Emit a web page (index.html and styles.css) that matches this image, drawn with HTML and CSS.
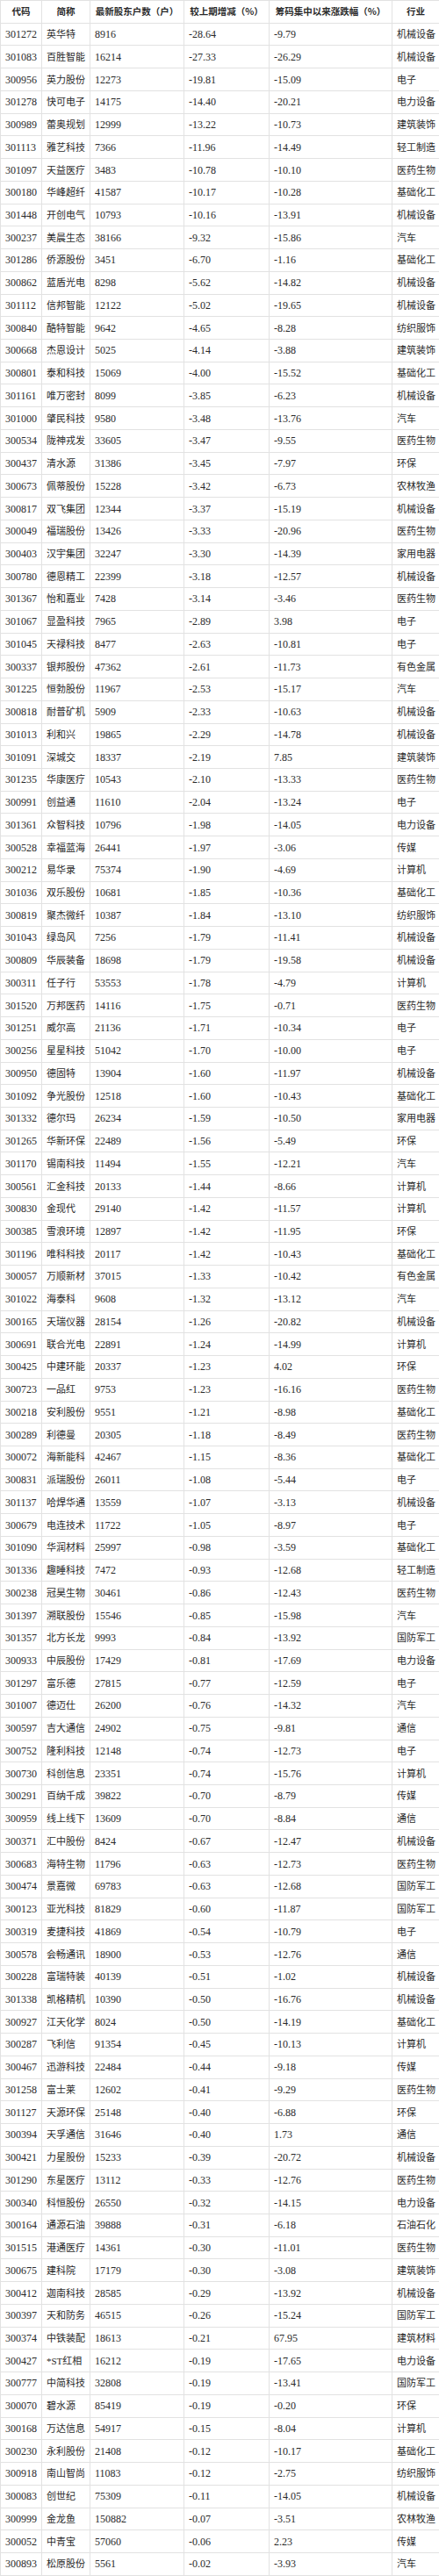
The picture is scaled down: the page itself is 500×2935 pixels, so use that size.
FILE: index.html
```html
<!DOCTYPE html>
<html lang="zh-CN">
<head>
<meta charset="utf-8">
<title>股东户数</title>
<link rel="stylesheet" href="styles.css">
</head>
<body>
<table class="grid">
<colgroup>
<col class="w-code"><col class="w-name"><col class="w-hold"><col class="w-chg"><col class="w-rate"><col class="w-ind">
</colgroup>
<thead>
<tr><th>代码</th><th>简称</th><th>最新股东户数（户）</th><th>较上期增减（%）</th><th>筹码集中以来涨跌幅（%）</th><th>行业</th></tr>
</thead>
<tbody>
<tr><td class="n">301272</td><td class="c">英华特</td><td class="n">8916</td><td class="n">-28.64</td><td class="n">-9.79</td><td class="c">机械设备</td></tr>
<tr><td class="n">301083</td><td class="c">百胜智能</td><td class="n">16214</td><td class="n">-27.33</td><td class="n">-26.29</td><td class="c">机械设备</td></tr>
<tr><td class="n">300956</td><td class="c">英力股份</td><td class="n">12273</td><td class="n">-19.81</td><td class="n">-15.09</td><td class="c">电子</td></tr>
<tr><td class="n">301278</td><td class="c">快可电子</td><td class="n">14175</td><td class="n">-14.40</td><td class="n">-20.21</td><td class="c">电力设备</td></tr>
<tr><td class="n">300989</td><td class="c">蕾奥规划</td><td class="n">12999</td><td class="n">-13.22</td><td class="n">-10.73</td><td class="c">建筑装饰</td></tr>
<tr><td class="n">301113</td><td class="c">雅艺科技</td><td class="n">7366</td><td class="n">-11.96</td><td class="n">-14.49</td><td class="c">轻工制造</td></tr>
<tr><td class="n">301097</td><td class="c">天益医疗</td><td class="n">3483</td><td class="n">-10.78</td><td class="n">-10.10</td><td class="c">医药生物</td></tr>
<tr><td class="n">300180</td><td class="c">华峰超纤</td><td class="n">41587</td><td class="n">-10.17</td><td class="n">-10.28</td><td class="c">基础化工</td></tr>
<tr><td class="n">301448</td><td class="c">开创电气</td><td class="n">10793</td><td class="n">-10.16</td><td class="n">-13.91</td><td class="c">机械设备</td></tr>
<tr><td class="n">300237</td><td class="c">美晨生态</td><td class="n">38166</td><td class="n">-9.32</td><td class="n">-15.86</td><td class="c">汽车</td></tr>
<tr><td class="n">301286</td><td class="c">侨源股份</td><td class="n">3451</td><td class="n">-6.70</td><td class="n">-1.16</td><td class="c">基础化工</td></tr>
<tr><td class="n">300862</td><td class="c">蓝盾光电</td><td class="n">8298</td><td class="n">-5.62</td><td class="n">-14.82</td><td class="c">机械设备</td></tr>
<tr><td class="n">301112</td><td class="c">信邦智能</td><td class="n">12122</td><td class="n">-5.02</td><td class="n">-19.65</td><td class="c">机械设备</td></tr>
<tr><td class="n">300840</td><td class="c">酷特智能</td><td class="n">9642</td><td class="n">-4.65</td><td class="n">-8.28</td><td class="c">纺织服饰</td></tr>
<tr><td class="n">300668</td><td class="c">杰恩设计</td><td class="n">5025</td><td class="n">-4.14</td><td class="n">-3.88</td><td class="c">建筑装饰</td></tr>
<tr><td class="n">300801</td><td class="c">泰和科技</td><td class="n">15069</td><td class="n">-4.00</td><td class="n">-15.52</td><td class="c">基础化工</td></tr>
<tr><td class="n">301161</td><td class="c">唯万密封</td><td class="n">8099</td><td class="n">-3.85</td><td class="n">-6.23</td><td class="c">机械设备</td></tr>
<tr><td class="n">301000</td><td class="c">肇民科技</td><td class="n">9580</td><td class="n">-3.48</td><td class="n">-13.76</td><td class="c">汽车</td></tr>
<tr><td class="n">300534</td><td class="c">陇神戎发</td><td class="n">33605</td><td class="n">-3.47</td><td class="n">-9.55</td><td class="c">医药生物</td></tr>
<tr><td class="n">300437</td><td class="c">清水源</td><td class="n">31386</td><td class="n">-3.45</td><td class="n">-7.97</td><td class="c">环保</td></tr>
<tr><td class="n">300673</td><td class="c">佩蒂股份</td><td class="n">15228</td><td class="n">-3.42</td><td class="n">-6.73</td><td class="c">农林牧渔</td></tr>
<tr><td class="n">300817</td><td class="c">双飞集团</td><td class="n">12344</td><td class="n">-3.37</td><td class="n">-15.19</td><td class="c">机械设备</td></tr>
<tr><td class="n">300049</td><td class="c">福瑞股份</td><td class="n">13426</td><td class="n">-3.33</td><td class="n">-20.96</td><td class="c">医药生物</td></tr>
<tr><td class="n">300403</td><td class="c">汉宇集团</td><td class="n">32247</td><td class="n">-3.30</td><td class="n">-14.39</td><td class="c">家用电器</td></tr>
<tr><td class="n">300780</td><td class="c">德恩精工</td><td class="n">22399</td><td class="n">-3.18</td><td class="n">-12.57</td><td class="c">机械设备</td></tr>
<tr><td class="n">301367</td><td class="c">怡和嘉业</td><td class="n">7428</td><td class="n">-3.14</td><td class="n">-3.46</td><td class="c">医药生物</td></tr>
<tr><td class="n">301067</td><td class="c">显盈科技</td><td class="n">7965</td><td class="n">-2.89</td><td class="n">3.98</td><td class="c">电子</td></tr>
<tr><td class="n">301045</td><td class="c">天禄科技</td><td class="n">8477</td><td class="n">-2.63</td><td class="n">-10.81</td><td class="c">电子</td></tr>
<tr><td class="n">300337</td><td class="c">银邦股份</td><td class="n">47362</td><td class="n">-2.61</td><td class="n">-11.73</td><td class="c">有色金属</td></tr>
<tr><td class="n">301225</td><td class="c">恒勃股份</td><td class="n">11967</td><td class="n">-2.53</td><td class="n">-15.17</td><td class="c">汽车</td></tr>
<tr><td class="n">300818</td><td class="c">耐普矿机</td><td class="n">5909</td><td class="n">-2.33</td><td class="n">-10.63</td><td class="c">机械设备</td></tr>
<tr><td class="n">301013</td><td class="c">利和兴</td><td class="n">19865</td><td class="n">-2.29</td><td class="n">-14.78</td><td class="c">机械设备</td></tr>
<tr><td class="n">301091</td><td class="c">深城交</td><td class="n">18337</td><td class="n">-2.19</td><td class="n">7.85</td><td class="c">建筑装饰</td></tr>
<tr><td class="n">301235</td><td class="c">华康医疗</td><td class="n">10543</td><td class="n">-2.10</td><td class="n">-13.33</td><td class="c">医药生物</td></tr>
<tr><td class="n">300991</td><td class="c">创益通</td><td class="n">11610</td><td class="n">-2.04</td><td class="n">-13.24</td><td class="c">电子</td></tr>
<tr><td class="n">301361</td><td class="c">众智科技</td><td class="n">10796</td><td class="n">-1.98</td><td class="n">-14.05</td><td class="c">电力设备</td></tr>
<tr><td class="n">300528</td><td class="c">幸福蓝海</td><td class="n">26441</td><td class="n">-1.97</td><td class="n">-3.06</td><td class="c">传媒</td></tr>
<tr><td class="n">300212</td><td class="c">易华录</td><td class="n">75374</td><td class="n">-1.90</td><td class="n">-4.69</td><td class="c">计算机</td></tr>
<tr><td class="n">301036</td><td class="c">双乐股份</td><td class="n">10681</td><td class="n">-1.85</td><td class="n">-10.36</td><td class="c">基础化工</td></tr>
<tr><td class="n">300819</td><td class="c">聚杰微纤</td><td class="n">10387</td><td class="n">-1.84</td><td class="n">-13.10</td><td class="c">纺织服饰</td></tr>
<tr><td class="n">301043</td><td class="c">绿岛风</td><td class="n">7256</td><td class="n">-1.79</td><td class="n">-11.41</td><td class="c">机械设备</td></tr>
<tr><td class="n">300809</td><td class="c">华辰装备</td><td class="n">18698</td><td class="n">-1.79</td><td class="n">-19.58</td><td class="c">机械设备</td></tr>
<tr><td class="n">300311</td><td class="c">任子行</td><td class="n">53553</td><td class="n">-1.78</td><td class="n">-4.79</td><td class="c">计算机</td></tr>
<tr><td class="n">301520</td><td class="c">万邦医药</td><td class="n">14116</td><td class="n">-1.75</td><td class="n">-0.71</td><td class="c">医药生物</td></tr>
<tr><td class="n">301251</td><td class="c">威尔高</td><td class="n">21136</td><td class="n">-1.71</td><td class="n">-10.34</td><td class="c">电子</td></tr>
<tr><td class="n">300256</td><td class="c">星星科技</td><td class="n">51042</td><td class="n">-1.70</td><td class="n">-10.00</td><td class="c">电子</td></tr>
<tr><td class="n">300950</td><td class="c">德固特</td><td class="n">13904</td><td class="n">-1.60</td><td class="n">-11.97</td><td class="c">机械设备</td></tr>
<tr><td class="n">301092</td><td class="c">争光股份</td><td class="n">12518</td><td class="n">-1.60</td><td class="n">-10.43</td><td class="c">基础化工</td></tr>
<tr><td class="n">301332</td><td class="c">德尔玛</td><td class="n">26234</td><td class="n">-1.59</td><td class="n">-10.50</td><td class="c">家用电器</td></tr>
<tr><td class="n">301265</td><td class="c">华新环保</td><td class="n">22489</td><td class="n">-1.56</td><td class="n">-5.49</td><td class="c">环保</td></tr>
<tr><td class="n">301170</td><td class="c">锡南科技</td><td class="n">11494</td><td class="n">-1.55</td><td class="n">-12.21</td><td class="c">汽车</td></tr>
<tr><td class="n">300561</td><td class="c">汇金科技</td><td class="n">20133</td><td class="n">-1.44</td><td class="n">-8.66</td><td class="c">计算机</td></tr>
<tr><td class="n">300830</td><td class="c">金现代</td><td class="n">29140</td><td class="n">-1.42</td><td class="n">-11.57</td><td class="c">计算机</td></tr>
<tr><td class="n">300385</td><td class="c">雪浪环境</td><td class="n">12897</td><td class="n">-1.42</td><td class="n">-11.95</td><td class="c">环保</td></tr>
<tr><td class="n">301196</td><td class="c">唯科科技</td><td class="n">20117</td><td class="n">-1.42</td><td class="n">-10.43</td><td class="c">基础化工</td></tr>
<tr><td class="n">300057</td><td class="c">万顺新材</td><td class="n">37015</td><td class="n">-1.33</td><td class="n">-10.42</td><td class="c">有色金属</td></tr>
<tr><td class="n">301022</td><td class="c">海泰科</td><td class="n">9608</td><td class="n">-1.32</td><td class="n">-13.12</td><td class="c">汽车</td></tr>
<tr><td class="n">300165</td><td class="c">天瑞仪器</td><td class="n">28154</td><td class="n">-1.26</td><td class="n">-20.82</td><td class="c">机械设备</td></tr>
<tr><td class="n">300691</td><td class="c">联合光电</td><td class="n">22891</td><td class="n">-1.24</td><td class="n">-14.99</td><td class="c">计算机</td></tr>
<tr><td class="n">300425</td><td class="c">中建环能</td><td class="n">20337</td><td class="n">-1.23</td><td class="n">4.02</td><td class="c">环保</td></tr>
<tr><td class="n">300723</td><td class="c">一品红</td><td class="n">9753</td><td class="n">-1.23</td><td class="n">-16.16</td><td class="c">医药生物</td></tr>
<tr><td class="n">300218</td><td class="c">安利股份</td><td class="n">9551</td><td class="n">-1.21</td><td class="n">-8.98</td><td class="c">基础化工</td></tr>
<tr><td class="n">300289</td><td class="c">利德曼</td><td class="n">20305</td><td class="n">-1.18</td><td class="n">-8.49</td><td class="c">医药生物</td></tr>
<tr><td class="n">300072</td><td class="c">海新能科</td><td class="n">42467</td><td class="n">-1.15</td><td class="n">-8.36</td><td class="c">基础化工</td></tr>
<tr><td class="n">300831</td><td class="c">派瑞股份</td><td class="n">26011</td><td class="n">-1.08</td><td class="n">-5.44</td><td class="c">电子</td></tr>
<tr><td class="n">301137</td><td class="c">哈焊华通</td><td class="n">13559</td><td class="n">-1.07</td><td class="n">-3.13</td><td class="c">机械设备</td></tr>
<tr><td class="n">300679</td><td class="c">电连技术</td><td class="n">11722</td><td class="n">-1.05</td><td class="n">-8.97</td><td class="c">电子</td></tr>
<tr><td class="n">301090</td><td class="c">华润材料</td><td class="n">25997</td><td class="n">-0.98</td><td class="n">-3.59</td><td class="c">基础化工</td></tr>
<tr><td class="n">301336</td><td class="c">趣睡科技</td><td class="n">7472</td><td class="n">-0.93</td><td class="n">-12.68</td><td class="c">轻工制造</td></tr>
<tr><td class="n">300238</td><td class="c">冠昊生物</td><td class="n">30461</td><td class="n">-0.86</td><td class="n">-12.43</td><td class="c">医药生物</td></tr>
<tr><td class="n">301397</td><td class="c">溯联股份</td><td class="n">15546</td><td class="n">-0.85</td><td class="n">-15.98</td><td class="c">汽车</td></tr>
<tr><td class="n">301357</td><td class="c">北方长龙</td><td class="n">9993</td><td class="n">-0.84</td><td class="n">-13.92</td><td class="c">国防军工</td></tr>
<tr><td class="n">300933</td><td class="c">中辰股份</td><td class="n">17429</td><td class="n">-0.81</td><td class="n">-17.69</td><td class="c">电力设备</td></tr>
<tr><td class="n">301297</td><td class="c">富乐德</td><td class="n">27815</td><td class="n">-0.77</td><td class="n">-12.59</td><td class="c">电子</td></tr>
<tr><td class="n">301007</td><td class="c">德迈仕</td><td class="n">26200</td><td class="n">-0.76</td><td class="n">-14.32</td><td class="c">汽车</td></tr>
<tr><td class="n">300597</td><td class="c">吉大通信</td><td class="n">24902</td><td class="n">-0.75</td><td class="n">-9.81</td><td class="c">通信</td></tr>
<tr><td class="n">300752</td><td class="c">隆利科技</td><td class="n">12148</td><td class="n">-0.74</td><td class="n">-12.73</td><td class="c">电子</td></tr>
<tr><td class="n">300730</td><td class="c">科创信息</td><td class="n">23351</td><td class="n">-0.74</td><td class="n">-15.76</td><td class="c">计算机</td></tr>
<tr><td class="n">300291</td><td class="c">百纳千成</td><td class="n">39822</td><td class="n">-0.70</td><td class="n">-8.79</td><td class="c">传媒</td></tr>
<tr><td class="n">300959</td><td class="c">线上线下</td><td class="n">13609</td><td class="n">-0.70</td><td class="n">-8.84</td><td class="c">通信</td></tr>
<tr><td class="n">300371</td><td class="c">汇中股份</td><td class="n">8424</td><td class="n">-0.67</td><td class="n">-12.47</td><td class="c">机械设备</td></tr>
<tr><td class="n">300683</td><td class="c">海特生物</td><td class="n">11796</td><td class="n">-0.63</td><td class="n">-12.73</td><td class="c">医药生物</td></tr>
<tr><td class="n">300474</td><td class="c">景嘉微</td><td class="n">69783</td><td class="n">-0.63</td><td class="n">-12.68</td><td class="c">国防军工</td></tr>
<tr><td class="n">300123</td><td class="c">亚光科技</td><td class="n">81829</td><td class="n">-0.60</td><td class="n">-11.87</td><td class="c">国防军工</td></tr>
<tr><td class="n">300319</td><td class="c">麦捷科技</td><td class="n">41869</td><td class="n">-0.54</td><td class="n">-10.79</td><td class="c">电子</td></tr>
<tr><td class="n">300578</td><td class="c">会畅通讯</td><td class="n">18900</td><td class="n">-0.53</td><td class="n">-12.76</td><td class="c">通信</td></tr>
<tr><td class="n">300228</td><td class="c">富瑞特装</td><td class="n">40139</td><td class="n">-0.51</td><td class="n">-1.02</td><td class="c">机械设备</td></tr>
<tr><td class="n">301338</td><td class="c">凯格精机</td><td class="n">10390</td><td class="n">-0.50</td><td class="n">-16.76</td><td class="c">机械设备</td></tr>
<tr><td class="n">300927</td><td class="c">江天化学</td><td class="n">8024</td><td class="n">-0.50</td><td class="n">-14.19</td><td class="c">基础化工</td></tr>
<tr><td class="n">300287</td><td class="c">飞利信</td><td class="n">91354</td><td class="n">-0.45</td><td class="n">-10.13</td><td class="c">计算机</td></tr>
<tr><td class="n">300467</td><td class="c">迅游科技</td><td class="n">22484</td><td class="n">-0.44</td><td class="n">-9.18</td><td class="c">传媒</td></tr>
<tr><td class="n">301258</td><td class="c">富士莱</td><td class="n">12602</td><td class="n">-0.41</td><td class="n">-9.29</td><td class="c">医药生物</td></tr>
<tr><td class="n">301127</td><td class="c">天源环保</td><td class="n">25148</td><td class="n">-0.40</td><td class="n">-6.88</td><td class="c">环保</td></tr>
<tr><td class="n">300394</td><td class="c">天孚通信</td><td class="n">31646</td><td class="n">-0.40</td><td class="n">1.73</td><td class="c">通信</td></tr>
<tr><td class="n">300421</td><td class="c">力星股份</td><td class="n">15233</td><td class="n">-0.39</td><td class="n">-20.72</td><td class="c">机械设备</td></tr>
<tr><td class="n">301290</td><td class="c">东星医疗</td><td class="n">13112</td><td class="n">-0.33</td><td class="n">-12.76</td><td class="c">医药生物</td></tr>
<tr><td class="n">300340</td><td class="c">科恒股份</td><td class="n">26550</td><td class="n">-0.32</td><td class="n">-14.15</td><td class="c">电力设备</td></tr>
<tr><td class="n">300164</td><td class="c">通源石油</td><td class="n">39888</td><td class="n">-0.31</td><td class="n">-6.18</td><td class="c">石油石化</td></tr>
<tr><td class="n">301515</td><td class="c">港通医疗</td><td class="n">14361</td><td class="n">-0.30</td><td class="n">-11.01</td><td class="c">医药生物</td></tr>
<tr><td class="n">300675</td><td class="c">建科院</td><td class="n">17179</td><td class="n">-0.30</td><td class="n">-3.08</td><td class="c">建筑装饰</td></tr>
<tr><td class="n">300412</td><td class="c">迦南科技</td><td class="n">28585</td><td class="n">-0.29</td><td class="n">-13.92</td><td class="c">机械设备</td></tr>
<tr><td class="n">300397</td><td class="c">天和防务</td><td class="n">46515</td><td class="n">-0.26</td><td class="n">-15.24</td><td class="c">国防军工</td></tr>
<tr><td class="n">300374</td><td class="c">中铁装配</td><td class="n">18613</td><td class="n">-0.21</td><td class="n">67.95</td><td class="c">建筑材料</td></tr>
<tr><td class="n">300427</td><td class="c">*ST红相</td><td class="n">16212</td><td class="n">-0.19</td><td class="n">-17.65</td><td class="c">电力设备</td></tr>
<tr><td class="n">300777</td><td class="c">中简科技</td><td class="n">32808</td><td class="n">-0.19</td><td class="n">-13.41</td><td class="c">国防军工</td></tr>
<tr><td class="n">300070</td><td class="c">碧水源</td><td class="n">85419</td><td class="n">-0.19</td><td class="n">-0.20</td><td class="c">环保</td></tr>
<tr><td class="n">300168</td><td class="c">万达信息</td><td class="n">54917</td><td class="n">-0.15</td><td class="n">-8.04</td><td class="c">计算机</td></tr>
<tr><td class="n">300230</td><td class="c">永利股份</td><td class="n">21408</td><td class="n">-0.12</td><td class="n">-10.17</td><td class="c">基础化工</td></tr>
<tr><td class="n">300918</td><td class="c">南山智尚</td><td class="n">11083</td><td class="n">-0.12</td><td class="n">-2.75</td><td class="c">纺织服饰</td></tr>
<tr><td class="n">300083</td><td class="c">创世纪</td><td class="n">75309</td><td class="n">-0.11</td><td class="n">-14.05</td><td class="c">机械设备</td></tr>
<tr><td class="n">300999</td><td class="c">金龙鱼</td><td class="n">150882</td><td class="n">-0.07</td><td class="n">-3.51</td><td class="c">农林牧渔</td></tr>
<tr><td class="n">300052</td><td class="c">中青宝</td><td class="n">57060</td><td class="n">-0.06</td><td class="n">2.23</td><td class="c">传媒</td></tr>
<tr><td class="n">300893</td><td class="c">松原股份</td><td class="n">5561</td><td class="n">-0.02</td><td class="n">-3.93</td><td class="c">汽车</td></tr>
</tbody>
</table>
</body>
</html>
```
FILE: styles.css
```css
html, body {
  margin: 0;
  padding: 0;
  background: #ffffff;
}

.grid {
  width: 500px;
  table-layout: fixed;
  border-collapse: collapse;
  color: #2a2a2a;
  font-family: "Liberation Serif", "Noto Sans CJK SC", serif;
}

.w-code { width: 47px; }
.w-name { width: 55px; }
.w-hold { width: 107px; }
.w-chg  { width: 97px; }
.w-rate { width: 140px; }
.w-ind  { width: 54px; }

.grid tr {
  height: 25.745px;
}

.grid th,
.grid td {
  border: 1px solid #e2e2e2;
  padding: 0 0 0 5px;
  vertical-align: middle;
  white-space: nowrap;
  overflow: hidden;
  line-height: 14px;
}

.grid th {
  font-family: "Noto Sans CJK SC", sans-serif;
  font-size: 10.5px;
  font-weight: 700;
  text-align: center;
  padding: 0;
}

.grid td.n {
  font-size: 12px;
}

.grid td.c {
  font-family: "Liberation Serif", "Noto Sans CJK SC", serif;
  font-size: 11px;
}
```
